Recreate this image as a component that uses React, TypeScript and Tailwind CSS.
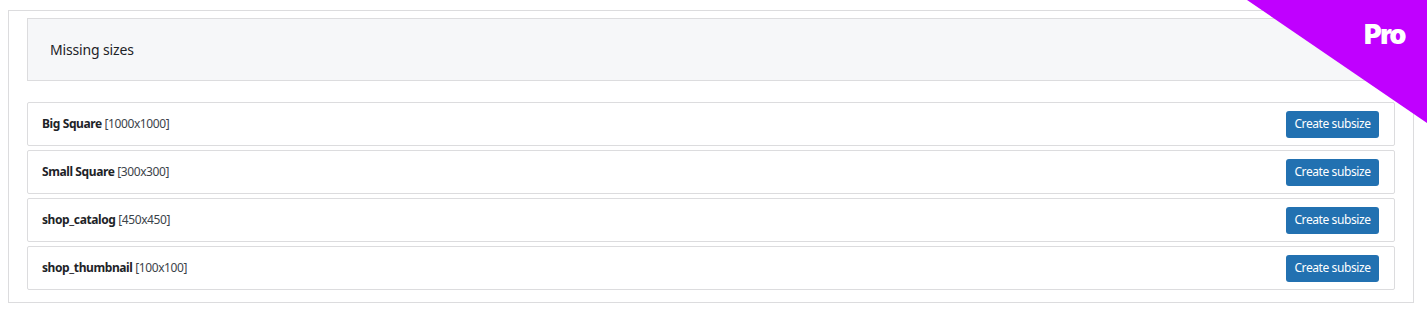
const sizes = [
  { name: "Big Square", dims: "[1000x1000]" },
  { name: "Small Square", dims: "[300x300]" },
  { name: "shop_catalog", dims: "[450x450]" },
  { name: "shop_thumbnail", dims: "[100x100]" },
];

export default function App() {
  return (
    <div
      className="relative h-[310px] w-[1427px] overflow-hidden bg-white pl-2 pr-[13px] pt-[10px] text-[#1d2327]"
      style={{ fontFamily: '"Noto Sans", "Open Sans", sans-serif' }}
    >
      <div className="border border-[#dcdcde] bg-white px-[18px] pb-3 pt-[7px]">
        <div className="flex h-[63px] items-center border border-[#dcdcde] bg-[#f6f7f9] px-[22px] text-[14px] tracking-[-0.15px]">
          Missing sizes
        </div>
        <div className="mt-[21px] flex flex-col gap-1">
          {sizes.map((s) => (
            <div
              key={s.name}
              className="flex h-[44px] items-center justify-between rounded-[2px] border border-[#dcdcde] bg-white pl-[14px] pr-[15px] text-[12px] tracking-[-0.4px]"
            >
              <div>
                <span className="font-bold text-[#1d2327]">{s.name}</span>{" "}
                <span className="text-[#3c434a]">{s.dims}</span>
              </div>
              <button className="h-[27px] w-[93px] rounded-[3px] bg-[#2271b1] text-[12px] tracking-[-0.4px] text-white">
                Create subsize
              </button>
            </div>
          ))}
        </div>
      </div>
      <div className="absolute right-0 top-0 h-[123px] w-[180px] bg-[#c000ff] [clip-path:polygon(0_0,100%_0,100%_100%)]" />
      <div
        className="absolute right-[22px] top-[21px] text-[27px] font-black leading-none tracking-[-1.5px] text-white"
        style={{ fontFamily: "Inter, sans-serif" }}
      >
        Pro
      </div>
    </div>
  );
}
